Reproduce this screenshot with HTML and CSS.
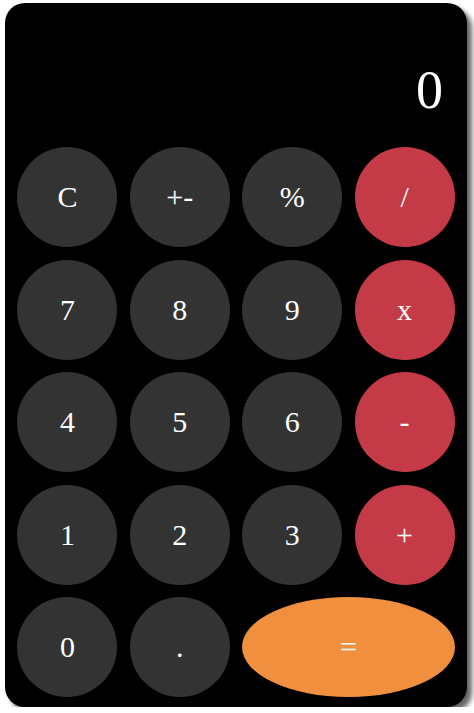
FILE: index.html
```html
<!DOCTYPE html>
<html>
<head>
<meta charset="utf-8">
<link rel="stylesheet" href="styles.css">
</head>
<body>
<div class="calc">
  <div class="display">0</div>
  <div class="keys">
    <button class="key">C</button>
    <button class="key">+-</button>
    <button class="key">%</button>
    <button class="key op">/</button>
    <button class="key">7</button>
    <button class="key">8</button>
    <button class="key">9</button>
    <button class="key op">x</button>
    <button class="key">4</button>
    <button class="key">5</button>
    <button class="key">6</button>
    <button class="key op">-</button>
    <button class="key">1</button>
    <button class="key">2</button>
    <button class="key">3</button>
    <button class="key op">+</button>
    <button class="key">0</button>
    <button class="key">.</button>
    <button class="key eq">=</button>
  </div>
</div>
</body>
</html>
```

FILE: styles.css
```css
html, body {
  margin: 0;
  padding: 0;
  background: #fff;
}
body {
  padding: 3px 0 0 5px;
  font-family: "Liberation Serif", "Times New Roman", serif;
}
.calc {
  width: 462px;
  height: 704px;
  box-sizing: border-box;
  background: #000;
  border-radius: 20px;
  box-shadow: 5px 5px 5px #666;
  padding-bottom: 10px;
  display: flex;
  flex-direction: column;
}
.display {
  height: 144px;
  box-sizing: border-box;
  padding: 60px 24px 0 0;
  text-align: right;
  color: #fff;
  font-size: 54px;
  line-height: 54px;
}
.keys {
  display: grid;
  grid-template-columns: repeat(4, 100px);
  grid-auto-rows: 100px;
  row-gap: 12.5px;
  justify-content: space-evenly;
}
.key {
  border: none;
  border-radius: 50%;
  background: #333333;
  color: #fff;
  font-family: inherit;
  font-size: 30px;
  padding: 0;
  margin: 0;
}
.op {
  background: #c43a47;
}
.eq {
  grid-column: span 2;
  background: #f0903f;
}
```
